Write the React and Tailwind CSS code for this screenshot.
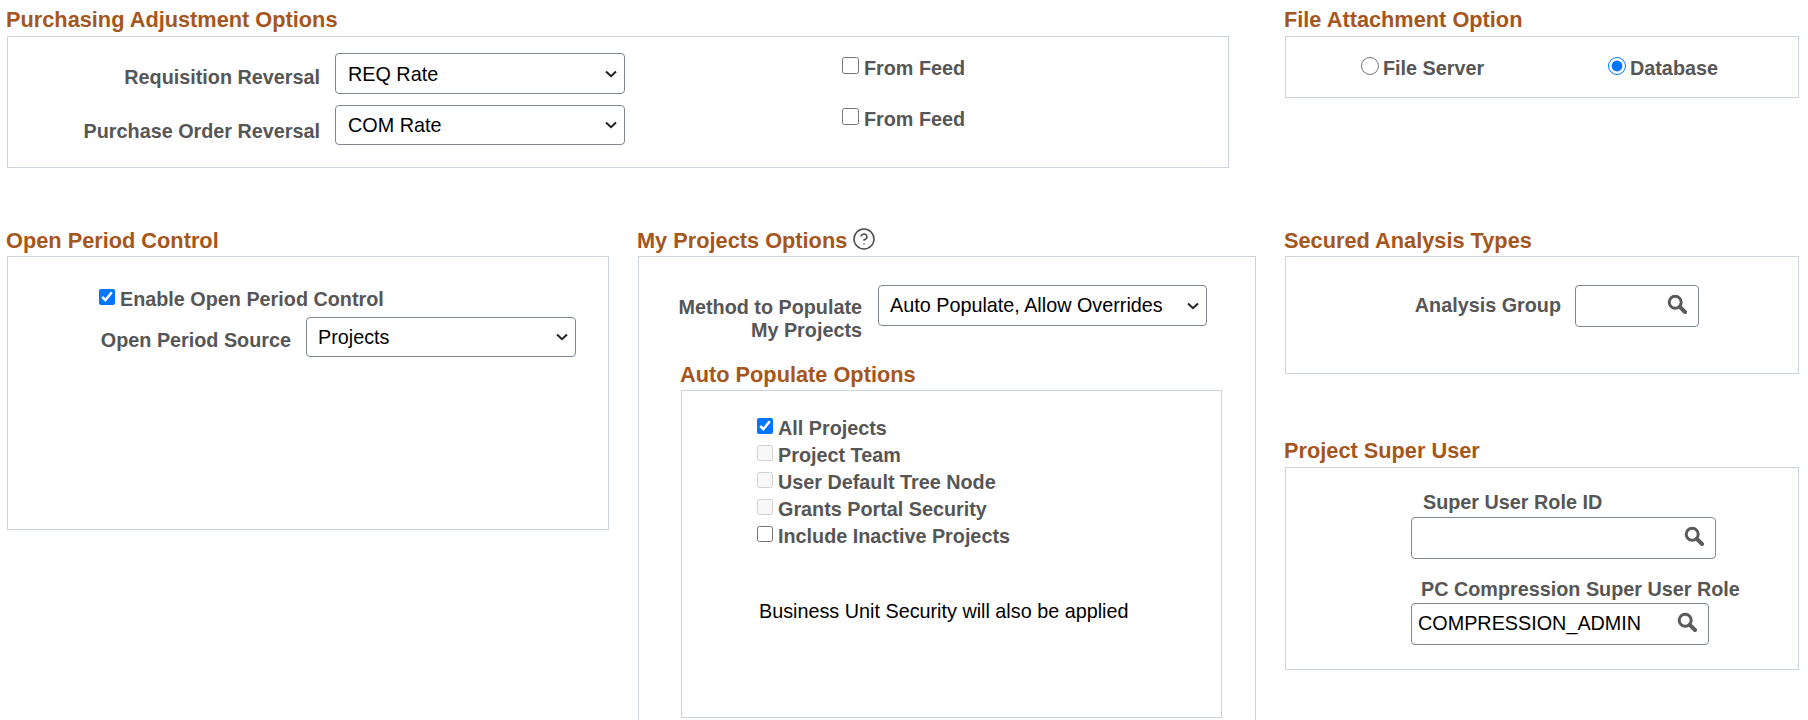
import { CircleHelp } from "lucide-react";

const font = "[font-family:'Liberation_Sans',Arial,sans-serif]";

function Heading({ children, className = "" }) {
  return (
    <h2 className={`h-[36px] -ml-px text-[21.75px] leading-[24px] font-bold text-[#a5561d] whitespace-nowrap ${className}`}>
      {children}
    </h2>
  );
}

function Box({ className = "", children }) {
  return <div className={`border border-[#cdd3da] bg-white ${className}`}>{children}</div>;
}

function Label({ children, className = "" }) {
  return <span className={`text-[19.8px] leading-[23px] font-bold text-[#565656] ${className}`}>{children}</span>;
}

function Sel({ value, className = "", textClass = "pl-[12px] pt-[2px]" }) {
  return (
    <div className={`relative ${className}`}>
      <select
        defaultValue={value}
        className={`block w-full h-full appearance-none border border-[#7f8690] rounded-[4px] bg-white text-black text-[19.8px] ${textClass}`}
      >
        <option value={value}>{value}</option>
      </select>
      <svg
        viewBox="0 0 12 8"
        className="absolute right-[8px] top-1/2 -mt-[4px] w-[12px] h-[8px] pointer-events-none"
        fill="none"
        stroke="#222222"
        strokeWidth="2"
      >
        <path d="M1 1.5 L6 6.2 L11 1.5" />
      </svg>
    </div>
  );
}

function Check({ label, className = "", boxClass = "w-[16px] h-[16px]", textClass = "ml-[5px] -mt-[1px]", ...rest }) {
  return (
    <label className={`flex items-start ${className}`}>
      <input type="checkbox" className={`m-0 shrink-0 ${boxClass}`} {...rest} />
      <Label className={textClass}>{label}</Label>
    </label>
  );
}

function SearchIcon({ className = "" }) {
  return (
    <svg viewBox="0 0 20 20" className={`w-[20px] h-[20px] ${className}`} fill="none" stroke="#5a5a5a">
      <circle cx="8.2" cy="8.2" r="6" strokeWidth="3" />
      <path d="M12.8 12.8 L18 18" strokeWidth="4" strokeLinecap="round" />
    </svg>
  );
}

function Lookup({ value = "", className = "" }) {
  return (
    <div className={`flex items-center border border-[#7f8690] rounded-[4px] bg-white ${className}`}>
      <input
        type="text"
        defaultValue={value}
        className="min-w-0 flex-1 pl-[6px] text-[19.8px] text-black outline-none bg-transparent"
      />
      <SearchIcon className="mr-[11px] -mt-[4px] shrink-0" />
    </div>
  );
}

export default function App() {
  return (
    <div className={`flex w-[1808px] h-[720px] overflow-hidden bg-white ${font}`}>
      {/* Left and middle area */}
      <div className="w-[1285px] shrink-0 pl-[7px]">
        <Heading className="pt-[8px]">Purchasing Adjustment Options</Heading>
        <Box className="w-[1222px] h-[132px] pt-[16px] flex">
          <div className="w-[312px] shrink-0 text-right">
            <div className="pt-[13px] h-[52px]">
              <Label className="block">Requisition Reversal</Label>
            </div>
            <div className="pt-[15px]">
              <Label className="block">Purchase Order Reversal</Label>
            </div>
          </div>
          <div className="ml-[15px] w-[290px] shrink-0 flex flex-col gap-[11px]">
            <Sel value="REQ Rate" className="w-full h-[41px]" />
            <Sel value="COM Rate" className="w-full h-[40px]" />
          </div>
          <div className="ml-[217px] pt-[4px]">
            <Check
              label="From Feed"
              className="h-[51px]"
              boxClass="w-[17px] h-[17px]"
              textClass="ml-[5px]"
            />
            <Check label="From Feed" boxClass="w-[17px] h-[17px]" textClass="ml-[5px]" />
          </div>
        </Box>

        <div className="flex mt-[52px]">
          <div className="w-[602px] shrink-0">
            <Heading className="pt-[9px]">Open Period Control</Heading>
            <Box className="h-[274px] pt-[32px] pl-[91px]">
              <Check label="Enable Open Period Control" defaultChecked />
              <div className="flex items-start mt-[6px] -ml-[10px]">
                <Label className="w-[208px] shrink-0 text-right pt-[12px] pr-[6px]">Open Period Source</Label>
                <Sel value="Projects" className="ml-[9px] w-[270px] h-[40px]" textClass="pl-[11px] pt-[2px]" />
              </div>
            </Box>
          </div>

          <div className="ml-[29px] w-[618px] shrink-0">
            <Heading className="pt-[9px] flex items-start">
              My Projects Options
              <CircleHelp size={24} strokeWidth={1.5} className="ml-[5px] -mt-[2px] text-[#4a4a4a]" />
            </Heading>
            <Box className="h-[480px] pt-[28px]">
              <div className="flex items-start">
                <Label className="w-[223px] shrink-0 text-right pt-[11px]">
                  Method to Populate
                  <br />
                  My Projects
                </Label>
                <Sel
                  value="Auto Populate, Allow Overrides"
                  className="ml-[16px] w-[329px] h-[41px]"
                  textClass="pl-[11px]"
                />
              </div>
              <div className="ml-[42px] mt-[12px]">
                <Heading className="pt-[9px] h-[30px]">Auto Populate Options</Heading>
                <Box className="w-[541px] h-[328px] pt-[27px] pl-[75px]">
                  <div className="flex flex-col gap-[5px]">
                    <Check label="All Projects" defaultChecked />
                    <Check label="Project Team" disabled />
                    <Check label="User Default Tree Node" disabled />
                    <Check label="Grants Portal Security" disabled />
                    <Check label="Include Inactive Projects" />
                  </div>
                  <p className="mt-[52px] ml-[2px] text-[19.8px] leading-[23px] text-black">
                    Business Unit Security will also be applied
                  </p>
                </Box>
              </div>
            </Box>
          </div>
        </div>
      </div>

      {/* Right column */}
      <div className="w-[515px] shrink-0">
        <Heading className="pt-[8px]">File Attachment Option</Heading>
        <Box className="w-[514px] h-[62px] flex pt-[20px]">
          <label className="flex items-start ml-[75px] w-[247px]">
            <input type="radio" name="attach" className="m-0 w-[18px] h-[18px]" />
            <Label className="ml-[4px]">File Server</Label>
          </label>
          <label className="flex items-start">
            <input type="radio" name="attach" defaultChecked className="m-0 w-[18px] h-[18px]" />
            <Label className="ml-[4px]">Database</Label>
          </label>
        </Box>

        <Heading className="mt-[122px] pt-[9px]">Secured Analysis Types</Heading>
        <Box className="w-[514px] h-[118px] pt-[28px] flex items-start">
          <Label className="w-[275px] shrink-0 text-right pt-[9px]">Analysis Group</Label>
          <Lookup className="ml-[14px] w-[124px] h-[42px]" />
        </Box>

        <Heading className="mt-[57px] pt-[8px]">Project Super User</Heading>
        <Box className="w-[514px] h-[203px] pl-[125px] pt-[23px]">
          <Label className="block ml-[12px]">Super User Role ID</Label>
          <Lookup className="w-[305px] h-[42px] mt-[3px]" />
          <Label className="block ml-[10px] mt-[19px]">PC Compression Super User Role</Label>
          <Lookup value="COMPRESSION_ADMIN" className="w-[298px] h-[42px] mt-[2px]" />
        </Box>
      </div>
    </div>
  );
}
